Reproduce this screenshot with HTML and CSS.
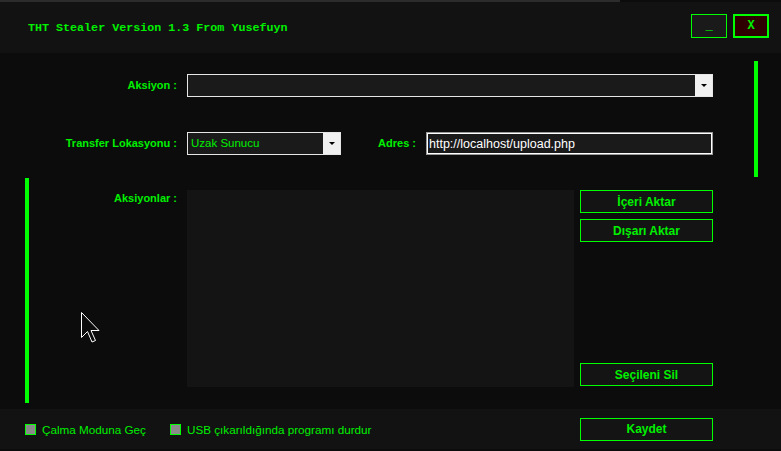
FILE: index.html
```html
<!DOCTYPE html>
<html lang="tr">
<head>
    <meta charset="UTF-8">
    <meta name="viewport" content="width=device-width, initial-scale=1.0">
    <title>THT Stealer</title>
    <link rel="stylesheet" href="styles.css">
</head>
<body>
    <div class="window">
        <div class="topline"></div>
        <header class="titlebar">
            <span class="title">THT Stealer Version 1.3 From Yusefuyn</span>
            <div class="window-buttons">
                <button class="btn-min">_</button>
                <button class="btn-close">X</button>
            </div>
        </header>

        <section class="main">
            <div class="left-rail"><div class="bar bar-left"></div></div>

            <div class="form">
                <div class="row row-action">
                    <label class="field-label">Aksiyon :</label>
                    <div class="combo combo-wide">
                        <span class="combo-text"></span>
                        <span class="combo-arrow"><i></i></span>
                    </div>
                </div>

                <div class="row row-transfer">
                    <label class="field-label">Transfer Lokasyonu :</label>
                    <div class="combo combo-small">
                        <span class="combo-text">Uzak Sunucu</span>
                        <span class="combo-arrow"><i></i></span>
                    </div>
                    <label class="field-label adres-label">Adres :</label>
                    <input type="text" class="adres-input" value="http://localhost/upload.php">
                </div>

                <div class="row row-list">
                    <label class="field-label list-label">Aksiyonlar :</label>
                    <div class="listbox"></div>
                    <div class="list-buttons">
                        <button class="action-btn">İçeri Aktar</button>
                        <button class="action-btn">Dışarı Aktar</button>
                        <button class="action-btn btn-delete">Seçileni Sil</button>
                    </div>
                </div>
            </div>

            <div class="right-rail"><div class="bar bar-right"></div></div>

            <svg class="cursor" width="19" height="31" viewBox="0 0 19 31">
                <path d="M0.5 0.5 L0.5 25.5 L6.5 19.5 L11 30 L14.5 28.5 L10 18.5 L18 18.5 Z" fill="#0c0c0c" stroke="#ffffff" stroke-width="1"/>
            </svg>
        </section>

        <footer class="footer">
            <div class="options">
                <label class="check"><span class="box"></span>Çalma Moduna Geç</label>
                <label class="check"><span class="box"></span>USB çıkarıldığında programı durdur</label>
            </div>
            <button class="action-btn">Kaydet</button>
        </footer>
    </div>
</body>
</html>
```

FILE: styles.css
```css
body {
    margin: 0;
    padding: 0;
    background-color: #0c0c0c;
    font-family: "Liberation Sans", Arial, sans-serif;
    color: #00f000;
}

.window {
    width: 781px;
    height: 451px;
    display: flex;
    flex-direction: column;
    overflow: hidden;
}

.topline {
    width: 620px;
    height: 2px;
    background-color: #2c2c2c;
    flex-shrink: 0;
}

.titlebar {
    height: 51px;
    flex-shrink: 0;
    background-color: #121212;
    display: flex;
    align-items: center;
    justify-content: space-between;
    padding: 0 12px 0 28px;
}

.title {
    font-family: "Liberation Mono", "Courier New", monospace;
    font-weight: bold;
    font-size: 11.7px;
    color: #00f000;
}

.window-buttons {
    display: flex;
    gap: 6px;
    align-self: flex-start;
    margin-top: 12px;
}

.window-buttons button {
    width: 36px;
    height: 24px;
    padding: 0;
    box-sizing: border-box;
    font-family: "Liberation Mono", monospace;
    font-weight: bold;
    font-size: 12px;
    color: #00f000;
    cursor: pointer;
}

.btn-min {
    background-color: #1a1a1a;
    border: 1px solid #00ff00;
    line-height: 14px;
}

.btn-close {
    background-color: #2e0000;
    border: 2px solid #00ff00;
}

.main {
    position: relative;
    height: 356px;
    flex-shrink: 0;
    display: flex;
    background-color: #0c0c0c;
}

.bar {
    width: 4px;
    background-color: #00ff00;
}

.left-rail {
    width: 29px;
    padding-left: 25px;
    box-sizing: border-box;
}

.bar-left {
    margin-top: 125px;
    height: 225px;
}

.right-rail {
    width: 68px;
    padding-left: 41px;
    box-sizing: border-box;
}

.bar-right {
    margin-top: 8px;
    height: 116px;
}

.form {
    width: 684px;
    display: flex;
    flex-direction: column;
}

.row {
    display: flex;
}

.row-action {
    margin-top: 21px;
    height: 23px;
}

.row-transfer {
    margin-top: 35px;
    height: 23px;
}

.row-list {
    margin-top: 35px;
    height: 197px;
}

.field-label {
    width: 148px;
    margin-right: 10px;
    text-align: right;
    font-weight: bold;
    font-size: 11px;
    line-height: 23px;
    color: #00f000;
    flex-shrink: 0;
}

.adres-label {
    width: 75px;
}

.list-label {
    line-height: 16px;
}

.combo {
    display: flex;
    height: 23px;
    box-sizing: border-box;
    border: 1px solid #e6e6e6;
    background-color: #1a1a1a;
}

.combo-wide {
    flex: 1;
}

.combo-small {
    width: 154px;
}

.combo-text {
    flex: 1;
    padding-left: 3px;
    font-size: 11.5px;
    line-height: 21px;
    color: #00f000;
}

.combo-arrow {
    width: 17px;
    background-color: #f0f0f0;
    display: flex;
    align-items: center;
    justify-content: center;
}

.combo-arrow i {
    width: 0;
    height: 0;
    border-left: 3px solid transparent;
    border-right: 3px solid transparent;
    border-top: 3px solid #000000;
    margin-bottom: 1px;
}

.adres-input {
    width: 287px;
    height: 23px;
    box-sizing: border-box;
    margin: 0;
    padding: 0 0 0 2px;
    border: 1px solid #9a9a9a;
    box-shadow: inset 0 0 0 1px #ffffff;
    background-color: #1a1a1a;
    color: #ffffff;
    font-family: "Liberation Sans", Arial, sans-serif;
    font-size: 12.5px;
    outline: none;
}

.listbox {
    width: 387px;
    background-color: #141414;
    margin-right: 6px;
}

.list-buttons {
    width: 133px;
    display: flex;
    flex-direction: column;
    gap: 6px;
}

.btn-delete {
    margin-top: auto;
    margin-bottom: 1px;
}

.action-btn {
    width: 133px;
    height: 23px;
    box-sizing: border-box;
    padding: 0;
    background-color: #141414;
    border: 1px solid #00ff00;
    color: #00f000;
    font-family: "Liberation Sans", Arial, sans-serif;
    font-weight: bold;
    font-size: 12px;
    cursor: pointer;
}

.cursor {
    position: absolute;
    left: 81px;
    top: 259px;
}

.footer {
    height: 40px;
    flex-shrink: 0;
    background-color: #121212;
    display: flex;
    align-items: center;
    justify-content: space-between;
    padding: 0 68px 0 25px;
}

.options {
    display: flex;
    gap: 24px;
}

.check {
    display: flex;
    align-items: center;
    font-size: 11.7px;
    color: #00f000;
}

.box {
    width: 11px;
    height: 11px;
    box-sizing: border-box;
    border: 1px solid #00ff00;
    background-color: #8a8a8a;
    margin-right: 6px;
}
```
